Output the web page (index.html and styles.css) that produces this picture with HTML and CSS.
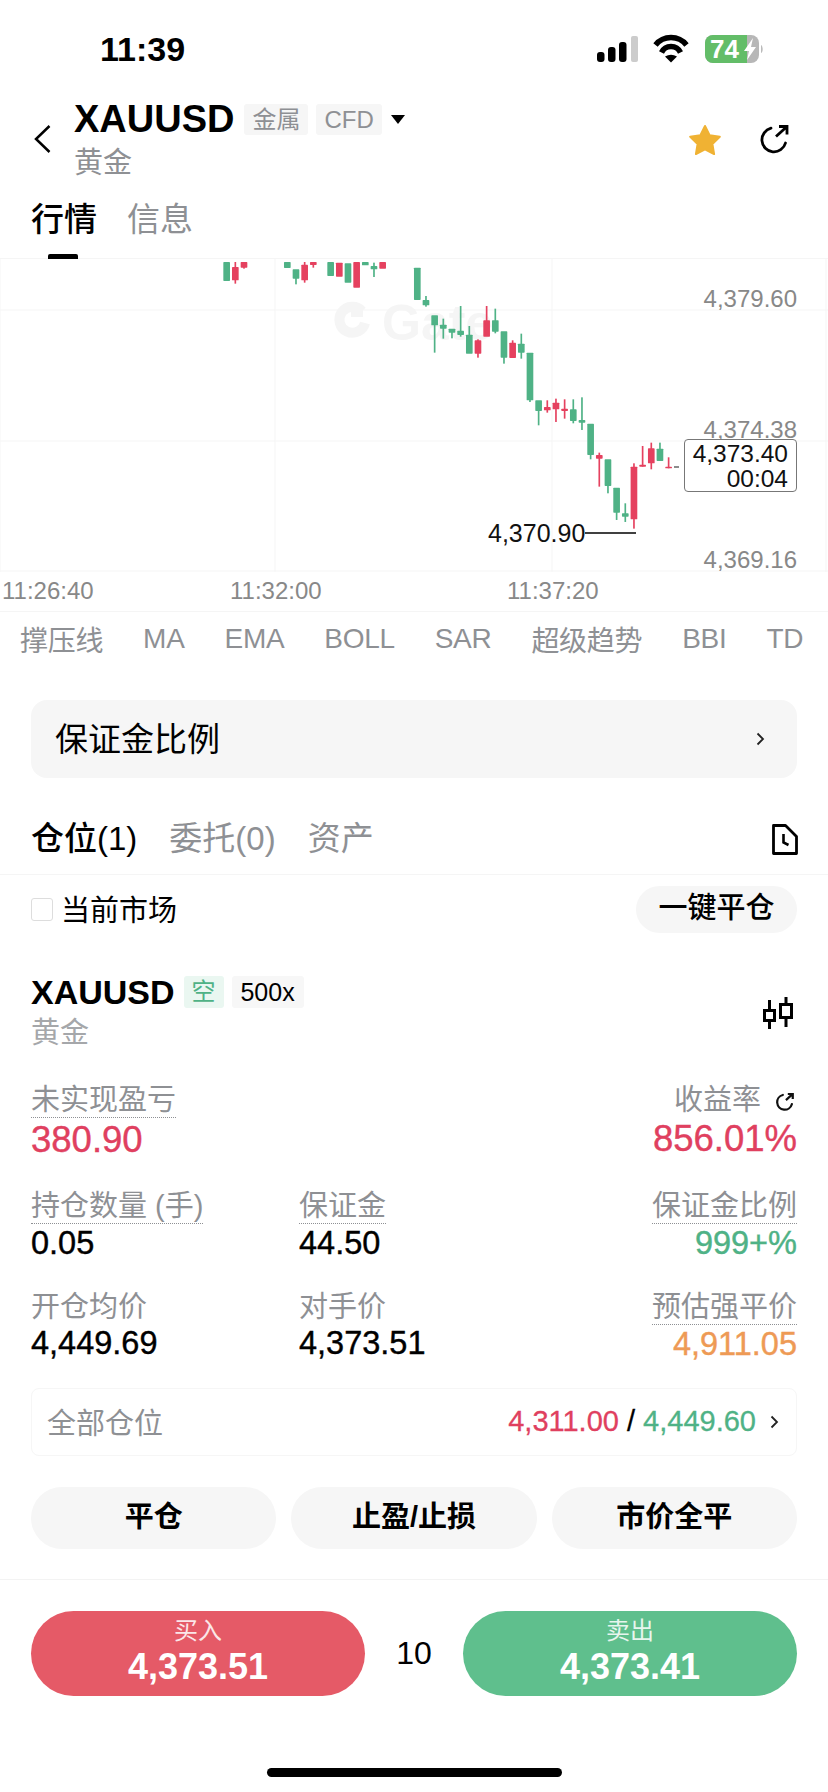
FILE: index.html
```html
<!DOCTYPE html>
<html lang="zh-CN">
<head>
  <meta charset="UTF-8">
  <title>XAUUSD</title>
  <link rel="stylesheet" href="styles.css">
</head>
<body>

  <div class="status">
    <span class="clock">11:39</span>
    <svg class="status-icons" width="170" height="32" viewBox="0 0 170 32">
      <rect x="2" y="18" width="7.500" height="10" rx="3" fill="#000"/>
      <rect x="13" y="13" width="7.500" height="15" rx="3" fill="#000"/>
      <rect x="24" y="8" width="7.500" height="20" rx="3" fill="#000"/>
      <rect x="36" y="2" width="7" height="26" rx="2" fill="#ccc"/>
      <path d="M60.500 11A19.800 19.800 0 0 1 91.500 11" fill="none" stroke="#000" stroke-width="5.500"/>
      <path d="M66.500 18.500A10.500 10.500 0 0 1 85.500 18.500" fill="none" stroke="#000" stroke-width="5.500"/>
      <path d="M70 22.500Q76 19 82 22.500L76 28.500z" fill="#000"/>
      <rect x="110" y="1" width="54" height="28" rx="8" fill="#b7b7b7"/>
      <path d="M118 1h34v28h-34a8 8 0 0 1-8-8v-12a8 8 0 0 1 8-8z" fill="#63bd68"/>
      <path d="M166 11c2 1 2.500 7 0 8z" fill="#bbb"/>
      <text x="115" y="23.500" class="battery-text">74</text>
      <path d="M158 4l-9 13h5l-2 9 9-13h-5z" fill="#fff"/>
    </svg>
  </div>

  <div class="nav">
    <svg class="back" width="17" height="28" viewBox="0 0 17 28">
      <path d="M15.500 1L2 14l13.500 13" fill="none" stroke="#000" stroke-width="2.500"/>
    </svg>
    <div class="title-block">
      <div class="title-row">
        <span class="symbol">XAUUSD</span>
        <span class="tag">金属</span>
        <span class="tag">CFD</span>
        <span class="caret"></span>
      </div>
      <div class="subtitle">黄金</div>
    </div>
    <div class="nav-actions">
      <svg width="34" height="31" viewBox="0 0 34 31">
        <path d="M17 2l4.600 9.300 10.200 1.500-7.400 7.200 1.700 10.100-9.100-4.800-9.100 4.800 1.700-10.100-7.400-7.200 10.200-1.500z" fill="#f0b233" stroke="#f0b233" stroke-width="2" stroke-linejoin="round"/>
      </svg>
      <svg width="29" height="29" viewBox="0 0 29 29">
        <path d="M11 3.200A12 12 0 1 0 25.500 18" fill="none" stroke="#000" stroke-width="2.800" stroke-linecap="round"/>
        <path d="M16 11.500L27 1.500M19 1.500h8v8" fill="none" stroke="#000" stroke-width="2.800"/>
      </svg>
    </div>
  </div>

  <div class="tabs">
    <div class="tab active">行情</div>
    <div class="tab">信息</div>
  </div>

  <div class="chart">
    <svg class="candles" width="828" height="313" viewBox="0 0 828 313">
      <path d="M0 51H828M0 182H828M275 0V313M552 0V313M0 312H828M0 0V313M826 0V313" stroke="#f5f5f5" stroke-width="1" fill="none"/>
      <path d="M362 52A13 13 0 1 0 365 64" fill="none" stroke="#f5f5f5" stroke-width="10"/>
      <rect x="351" y="46" width="12" height="12" fill="#f5f5f5"/>
      <text x="382" y="81" class="watermark">Gate</text>

      <g transform="translate(200 -3) scale(.3333)">
        <g class="up">
          <rect x="70" y="18" width="20" height="57" rx="2"/>
          <rect x="252" y="18" width="20" height="18" rx="2"/>
          <rect x="278" y="40" width="20" height="28" rx="2"/><rect x="285.500" y="60" width="5" height="25"/>
          <rect x="382" y="18" width="20" height="42" rx="2"/>
          <rect x="434" y="22" width="20" height="58" rx="2"/>
          <rect x="486" y="18" width="20" height="10" rx="2"/>
          <rect x="512" y="30" width="20" height="10" rx="2"/><rect x="519.500" y="20" width="5" height="43"/>
          <rect x="642" y="35" width="20" height="97" rx="2"/>
          <rect x="668" y="132" width="20" height="16" rx="2"/><rect x="675.500" y="120" width="5" height="32"/>
          <rect x="694" y="178" width="20" height="30" rx="2"/><rect x="701.500" y="200" width="5" height="90"/>
          <rect x="720" y="206" width="20" height="12" rx="2"/><rect x="727.500" y="188" width="5" height="60"/>
          <rect x="746" y="218" width="20" height="12" rx="2"/><rect x="753.500" y="225" width="5" height="22"/>
          <rect x="772" y="224" width="20" height="13" rx="2"/><rect x="779.500" y="150" width="5" height="92"/>
          <rect x="798" y="236" width="20" height="57" rx="2"/><rect x="805.500" y="210" width="5" height="40"/>
          <rect x="876" y="193" width="20" height="34" rx="2"/><rect x="883.500" y="158" width="5" height="74"/>
          <rect x="902" y="226" width="20" height="79" rx="2"/><rect x="909.500" y="295" width="5" height="28"/>
          <rect x="954" y="263" width="20" height="27" rx="2"/><rect x="961.500" y="233" width="5" height="75"/>
          <rect x="980" y="290" width="20" height="143" rx="2"/><rect x="987.500" y="425" width="5" height="13"/>
          <rect x="1006" y="433" width="20" height="32" rx="2"/><rect x="1013.500" y="450" width="5" height="58"/>
          <rect x="1110" y="460" width="20" height="35" rx="2"/><rect x="1117.500" y="430" width="5" height="72"/>
          <rect x="1136" y="492" width="20" height="8" rx="2"/><rect x="1143.500" y="424" width="5" height="98"/>
          <rect x="1162" y="503" width="20" height="94" rx="2"/><rect x="1169.500" y="590" width="5" height="20"/>
          <rect x="1214" y="610" width="20" height="80" rx="2"/><rect x="1221.500" y="680" width="5" height="32"/>
          <rect x="1240" y="695" width="20" height="75" rx="2"/><rect x="1247.500" y="760" width="5" height="32"/>
          <rect x="1266" y="772" width="20" height="10" rx="2"/><rect x="1273.500" y="742" width="5" height="56"/>
          <rect x="1370" y="578" width="20" height="37" rx="2"/><rect x="1377.500" y="560" width="5" height="30"/>
        </g>
        <g class="down">
          <rect x="96" y="33" width="20" height="40" rx="2"/><rect x="103.500" y="18" width="5" height="65"/>
          <rect x="122" y="18" width="20" height="17" rx="2"/><rect x="129.500" y="25" width="5" height="13"/>
          <rect x="304" y="26" width="20" height="47" rx="2"/><rect x="311.500" y="18" width="5" height="62"/>
          <rect x="330" y="18" width="20" height="9" rx="2"/><rect x="337.500" y="20" width="5" height="15"/>
          <rect x="408" y="20" width="20" height="42" rx="2"/>
          <rect x="460" y="18" width="20" height="77" rx="2"/>
          <rect x="538" y="18" width="20" height="20" rx="2"/>
          <rect x="824" y="253" width="20" height="40" rx="2"/><rect x="831.500" y="250" width="5" height="55"/>
          <rect x="850" y="193" width="20" height="49" rx="2"/><rect x="857.500" y="150" width="5" height="60"/>
          <rect x="928" y="260" width="20" height="46" rx="2"/><rect x="935.500" y="253" width="5" height="20"/>
          <rect x="1032" y="453" width="20" height="10" rx="2"/><rect x="1039.500" y="433" width="5" height="37"/>
          <rect x="1058" y="440" width="20" height="20" rx="2"/><rect x="1065.500" y="428" width="5" height="70"/>
          <rect x="1084" y="458" width="20" height="7" rx="2"/><rect x="1091.500" y="430" width="5" height="58"/>
          <rect x="1188" y="597" width="20" height="11" rx="2"/><rect x="1195.500" y="590" width="5" height="102"/>
          <rect x="1292" y="632" width="20" height="158" rx="2"/><rect x="1299.500" y="622" width="5" height="196"/>
          <rect x="1318" y="626" width="20" height="6" rx="2"/><rect x="1325.500" y="570" width="5" height="62"/>
          <rect x="1344" y="577" width="20" height="45" rx="2"/><rect x="1351.500" y="560" width="5" height="80"/>
          <rect x="1396" y="632" width="20" height="5" rx="2"/><rect x="1403.500" y="604" width="5" height="33"/>
        </g>
      </g>
      <path d="M674 208H679" stroke="#666" stroke-width="1.500"/>
      <path d="M585 274H636" stroke="#000" stroke-width="1.500"/>
    </svg>
    <span class="axis-price price-high">4,379.60</span>
    <span class="axis-price price-mid">4,374.38</span>
    <span class="axis-price price-low">4,369.16</span>
    <span class="low-mark">4,370.90</span>
    <div class="last-price">4,373.40<br>00:04</div>
  </div>

  <div class="time-axis">
    <span class="time-a">11:26:40</span>
    <span class="time-b">11:32:00</span>
    <span class="time-c">11:37:20</span>
  </div>

  <div class="indicators">
    <span>撑压线</span>
    <span>MA</span>
    <span>EMA</span>
    <span>BOLL</span>
    <span>SAR</span>
    <span>超级趋势</span>
    <span>BBI</span>
    <span>TD</span>
  </div>

  <div class="margin-card">
    <span class="card-label">保证金比例</span>
    <svg class="chevron" width="9" height="14" viewBox="0 0 9 14">
      <path d="M1.500 1.500L7 7l-5.500 5.500" fill="none" stroke="#222" stroke-width="1.800"/>
    </svg>
  </div>

  <div class="pos-tabs">
    <span class="pos-tab active">仓位(1)</span>
    <span class="pos-tab">委托(0)</span>
    <span class="pos-tab">资产</span>
    <svg class="doc-icon" width="26" height="31" viewBox="0 0 26 31">
      <path d="M1.500 1.500H13.500L24.500 12.500V29.500H1.500z" fill="none" stroke="#000" stroke-width="2.800" stroke-linejoin="round"/>
      <path d="M11.500 10v8.500l5 2.500" fill="none" stroke="#000" stroke-width="2.600"/>
    </svg>
  </div>

  <div class="filter-row">
    <span class="checkbox"></span>
    <span class="filter-label">当前市场</span>
    <span class="close-all">一键平仓</span>
  </div>

  <div class="contract">
    <div>
      <div class="contract-title">
        <span class="contract-name">XAUUSD</span>
        <span class="side-tag">空</span>
        <span class="lever-tag">500x</span>
      </div>
      <div class="contract-sub">黄金</div>
    </div>
    <svg class="candle-icon" width="30" height="32" viewBox="0 0 30 32">
      <path d="M6.500 3V12.500M6.500 24V32M23 0V7.500M23 20.500V30" fill="none" stroke="#000" stroke-width="3"/>
      <rect x="1.500" y="13.500" width="10" height="10" fill="none" stroke="#000" stroke-width="3"/>
      <rect x="17.500" y="7.500" width="11" height="13" fill="none" stroke="#000" stroke-width="3"/>
    </svg>
  </div>

  <div class="metrics first">
    <div>
      <span class="label dotted">未实现盈亏</span>
      <div class="value big red">380.90</div>
    </div>
    <div class="right col3">
      <span class="label">收益率
        <svg class="small-share" width="18" height="18" viewBox="0 0 29 29">
          <path d="M11 3.200A12 12 0 1 0 25.500 18" fill="none" stroke="#111" stroke-width="3.600" stroke-linecap="round"/>
          <path d="M16 11.500L27 1.500M19 1.500h8v8" fill="none" stroke="#111" stroke-width="3.600"/>
        </svg>
      </span>
      <div class="value big red">856.01%</div>
    </div>
  </div>

  <div class="metrics second">
    <div>
      <span class="label dotted">持仓数量 (手)</span>
      <div class="value">0.05</div>
    </div>
    <div>
      <span class="label dotted">保证金</span>
      <div class="value">44.50</div>
    </div>
    <div class="right">
      <span class="label dotted">保证金比例</span>
      <div class="value green">999+%</div>
    </div>
  </div>

  <div class="metrics third">
    <div>
      <span class="label">开仓均价</span>
      <div class="value">4,449.69</div>
    </div>
    <div>
      <span class="label">对手价</span>
      <div class="value">4,373.51</div>
    </div>
    <div class="right">
      <span class="label dotted">预估强平价</span>
      <div class="value orange">4,911.05</div>
    </div>
  </div>

  <div class="all-pos">
    <span class="all-label">全部仓位</span>
    <span class="all-values"><span class="red">4,311.00</span> / <span class="green">4,449.60</span></span>
    <svg class="chevron" width="9" height="14" viewBox="0 0 9 14">
      <path d="M1.500 1.500L7 7l-5.500 5.500" fill="none" stroke="#222" stroke-width="1.800"/>
    </svg>
  </div>

  <div class="actions">
    <span class="action">平仓</span>
    <span class="action">止盈/止损</span>
    <span class="action">市价全平</span>
  </div>

  <div class="trade">
    <div class="trade-btn buy">
      <span class="trade-label">买入</span>
      <span class="trade-price">4,373.51</span>
    </div>
    <span class="lots">10</span>
    <div class="trade-btn sell">
      <span class="trade-label">卖出</span>
      <span class="trade-price">4,373.41</span>
    </div>
  </div>

  <div class="home-bar"></div>

</body>
</html>
```

FILE: styles.css
```css
body {
  font-family: "Liberation Sans", "Noto Sans CJK SC", sans-serif;
  background: #fff;
  color: #000;
  margin: 0;
  width: 828px;
  overflow-x: hidden;
}

svg {
  display: block;
  flex: none;
}

/* status bar */
.status {
  height: 97px;
  display: flex;
  align-items: center;
  padding: 0 63px 0 100px;
}

.clock {
  font-size: 34px;
  font-weight: bold;
  line-height: 40px;
}

.status-icons {
  margin-left: auto;
  align-self: flex-start;
  margin-top: 34px;
}

.battery-text {
  font-size: 26px;
  font-weight: bold;
  fill: #fff;
}

/* header */
.nav {
  height: 84px;
  display: flex;
  align-items: center;
  padding: 0 39px 0 34px;
}

.back {
  margin-right: 23px;
}

.title-block {
  align-self: flex-start;
}

.title-row {
  height: 44px;
  display: flex;
  align-items: center;
}

.symbol {
  font-size: 38px;
  font-weight: bold;
  margin-right: 10px;
}

.tag {
  height: 31px;
  line-height: 31px;
  padding: 0 8px;
  margin-right: 8px;
  background: #f6f6f6;
  border-radius: 3px;
  font-size: 24px;
  color: #8e9094;
}

.caret {
  width: 0;
  height: 0;
  margin-left: 1px;
  border-left: 7px solid transparent;
  border-right: 7px solid transparent;
  border-top: 9px solid #000;
}

.subtitle {
  font-size: 29px;
  line-height: 44px;
  color: #8e9094;
}

.nav-actions {
  margin-left: auto;
  display: flex;
  align-items: center;
  gap: 38px;
}

.tabs {
  height: 77px;
  box-sizing: border-box;
  display: flex;
  gap: 30px;
  padding: 19px 0 0 31px;
}

.tab {
  position: relative;
  font-size: 33px;
  line-height: 40px;
  color: #8e9094;
}

.tab.active {
  color: #000;
  font-weight: 500;
}

.tab.active::after {
  content: "";
  position: absolute;
  z-index: 1;
  left: 17px;
  top: 54px;
  width: 30px;
  height: 5px;
  background: #000;
  border-radius: 2px 2px 0 0;
}

/* chart */
.chart {
  position: relative;
  height: 313px;
  border-top: 1px solid #f5f5f5;
  box-sizing: border-box;
}

.candles {
  position: absolute;
  left: 0;
  top: 0;
}

.up {
  fill: #4fb286;
}

.down {
  fill: #e5415f;
}

.watermark {
  font-size: 50px;
  font-weight: bold;
  fill: #f5f5f5;
}

.axis-price {
  position: absolute;
  right: 31px;
  font-size: 24px;
  line-height: 28px;
  color: #888;
}

.price-high {
  top: 26px;
}

.price-mid {
  top: 157px;
}

.price-low {
  top: 287px;
}

.low-mark {
  position: absolute;
  left: 488px;
  top: 260px;
  font-size: 25px;
  line-height: 28px;
  color: #111;
}

.last-price {
  position: absolute;
  left: 684px;
  top: 180px;
  width: 113px;
  height: 53px;
  box-sizing: border-box;
  padding: 1px 8px 0 0;
  border: 1px solid #777;
  border-radius: 4px;
  background: #fff;
  text-align: right;
  font-size: 24.500px;
  line-height: 25px;
  color: #111;
}

.time-axis {
  position: relative;
  height: 40px;
  border-bottom: 1px solid #f5f5f5;
  font-size: 24px;
  color: #888;
}

.time-axis span {
  position: absolute;
  top: 6px;
  line-height: 28px;
}

.time-a {
  left: 2px;
}

.time-b {
  left: 230px;
}

.time-c {
  left: 507px;
}

.indicators {
  height: 54px;
  display: flex;
  align-items: center;
  gap: 40px;
  padding-left: 20px;
  white-space: nowrap;
  font-size: 28px;
  letter-spacing: -.3px;
  color: #8e9094;
}

.margin-card {
  height: 78px;
  margin: 34px 31px 0;
  padding: 0 32px 0 24px;
  display: flex;
  align-items: center;
  justify-content: space-between;
  background: #f6f6f6;
  border-radius: 16px;
}

.card-label {
  font-size: 33px;
  margin-top: -4px;
}

/* positions */
.pos-tabs {
  height: 54px;
  margin-top: 42px;
  padding: 0 30px 0 31px;
  display: flex;
  gap: 32px;
  border-bottom: 1px solid #f5f5f5;
}

.pos-tab {
  font-size: 33px;
  line-height: 38px;
  color: #8e9094;
}

.pos-tab.active {
  color: #000;
  font-weight: 500;
}

.doc-icon {
  margin: 4px 0 0 auto;
}

.filter-row {
  height: 47px;
  margin-top: 11px;
  padding: 0 31px;
  display: flex;
  align-items: center;
}

.checkbox {
  width: 20px;
  height: 21px;
  border: 1px solid #ddd;
  border-radius: 3px;
  margin-right: 8px;
}

.filter-label {
  font-size: 29px;
  margin-top: -4px;
}

.close-all {
  margin-left: auto;
  width: 161px;
  height: 47px;
  line-height: 44px;
  text-align: center;
  background: #f6f6f6;
  border-radius: 24px;
  font-size: 29px;
  font-weight: 500;
}

.contract {
  margin-top: 39px;
  padding: 0 35px 0 31px;
  display: flex;
  align-items: center;
  justify-content: space-between;
}

.contract-title {
  height: 40px;
  display: flex;
  align-items: center;
}

.contract-name {
  font-size: 34px;
  font-weight: bold;
  margin-right: 9px;
}

.side-tag {
  width: 40px;
  height: 32px;
  line-height: 32px;
  text-align: center;
  margin-right: 8px;
  background: #eaf7f1;
  border-radius: 3px;
  font-size: 24px;
  color: #4fb286;
}

.lever-tag {
  width: 72px;
  height: 32px;
  line-height: 32px;
  text-align: center;
  background: #f7f7f7;
  border-radius: 3px;
  font-size: 25px;
}

.contract-sub {
  font-size: 29px;
  line-height: 42px;
  color: #a5a7aa;
}

.metrics {
  padding: 0 31px;
  display: grid;
  grid-template-columns: 268px 1fr auto;
}

.first {
  margin-top: 29px;
}

.second {
  margin-top: 29px;
}

.third {
  margin-top: 27px;
}

.col3 {
  grid-column: 3;
}

.right {
  text-align: right;
}

.label {
  display: inline-block;
  height: 34px;
  font-size: 29px;
  line-height: 34px;
  color: #8e9094;
  white-space: nowrap;
}

.dotted {
  border-bottom: 1px dotted #8e9094;
}

.small-share {
  display: inline-block;
  margin: 0 3px 0 7px;
  vertical-align: -1px;
}

.value {
  font-size: 32.500px;
  line-height: 40px;
  margin-top: -1px;
  -webkit-text-stroke: .4px currentColor;
}

.value.big {
  font-size: 36.500px;
  margin-top: 2px;
}

.red {
  color: #e0405f;
}

.green {
  color: #4fb286;
}

.orange {
  color: #ee9a55;
}

.all-pos {
  height: 68px;
  box-sizing: border-box;
  margin: 24px 31px 0;
  padding: 0 17px 0 15px;
  display: flex;
  align-items: center;
  border: 1px solid #f6f6f6;
  border-radius: 8px;
}

.all-label {
  font-size: 29px;
  margin-top: -3px;
  color: #8e9094;
}

.all-values {
  margin-left: auto;
  margin-right: 14px;
  margin-top: -2px;
  font-size: 29px;
  -webkit-text-stroke: .3px currentColor;
}

.actions {
  margin-top: 31px;
  padding: 0 31px;
  display: flex;
  gap: 15px;
}

.action {
  flex: 1;
  height: 62px;
  line-height: 60px;
  text-align: center;
  background: #f6f6f6;
  border-radius: 31px;
  font-size: 29px;
  font-weight: bold;
}

/* buy / sell */
.trade {
  margin-top: 30px;
  padding: 31px 31px 0;
  border-top: 1px solid #f3f3f3;
  display: flex;
  align-items: center;
}

.trade-btn {
  width: 334px;
  height: 85px;
  border-radius: 43px;
  display: flex;
  flex-direction: column;
  align-items: center;
  color: #fff;
}

.buy {
  background: #e55a67;
}

.sell {
  background: #5fbf8d;
}

.trade-label {
  margin-top: 4px;
  font-size: 24px;
  line-height: 32px;
  opacity: .85;
}

.trade-price {
  font-size: 36px;
  font-weight: bold;
  line-height: 40px;
}

.lots {
  flex: 1;
  text-align: center;
  font-size: 32px;
}

.home-bar {
  width: 295px;
  height: 9px;
  margin: 72px auto 0;
  background: #000;
  border-radius: 5px;
}
```
